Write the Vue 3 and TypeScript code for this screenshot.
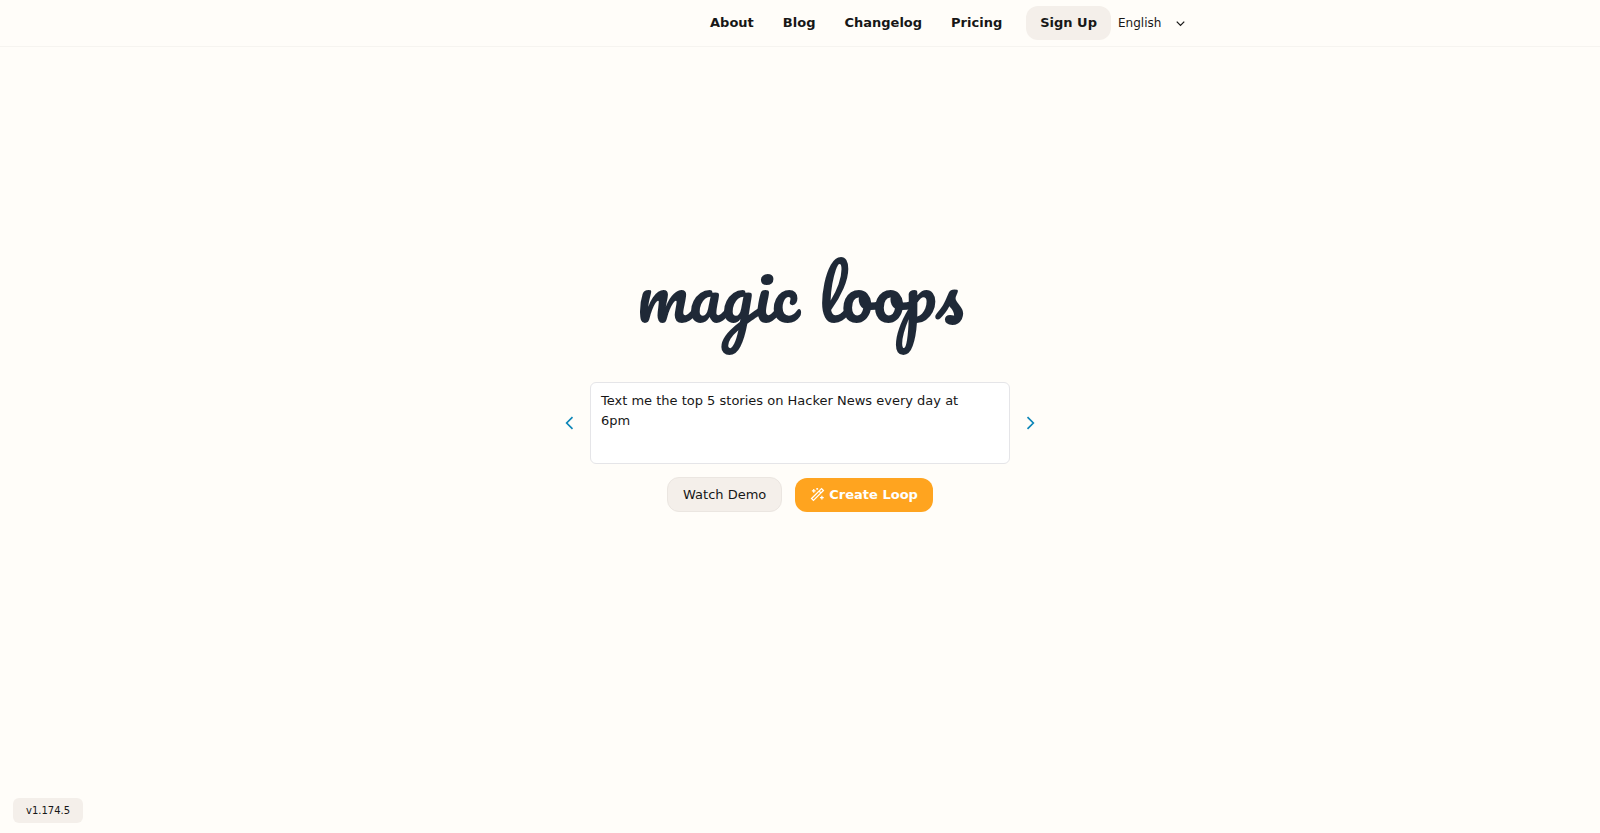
<script setup lang="ts">
import { ref } from 'vue'

interface NavLink {
  label: string
  href: string
}

const links: NavLink[] = [
  { label: 'About', href: '#about' },
  { label: 'Blog', href: '#blog' },
  { label: 'Changelog', href: '#changelog' },
  { label: 'Pricing', href: '#pricing' },
]

const prompts: string[] = [
  'Text me the top 5 stories on Hacker News every day at 6pm',
  'Email me the weather forecast every morning at 8am',
]

const index = ref(0)
const prompt = ref(prompts[0])
const language = ref('English')

function step(delta: number): void {
  index.value = (index.value + delta + prompts.length) % prompts.length
  prompt.value = prompts[index.value]
}
</script>

<template>
  <div class="page">
    <header class="header">
      <nav class="nav" aria-label="Main">
        <a v-for="link in links" :key="link.label" class="nav-link" :href="link.href">{{ link.label }}</a>
      </nav>
      <a class="sign-up" href="#signup">Sign Up</a>
      <div class="language">
        <select v-model="language" class="language-select" aria-label="Language">
          <option>English</option>
        </select>
        <svg class="language-icon" viewBox="0 0 24 24" aria-hidden="true">
          <path d="M6 9l6 6 6-6" />
        </svg>
      </div>
    </header>

    <main class="main">
      <h1 class="wordmark">magic loops</h1>
      <div class="composer">
        <button class="arrow" type="button" aria-label="Previous example" @click="step(-1)">
          <svg class="arrow-icon" viewBox="0 0 24 24"><path d="M15 5l-7 7 7 7" /></svg>
        </button>
        <textarea v-model="prompt" class="prompt" aria-label="Describe your loop"></textarea>
        <button class="arrow" type="button" aria-label="Next example" @click="step(1)">
          <svg class="arrow-icon" viewBox="0 0 24 24"><path d="M9 5l7 7-7 7" /></svg>
        </button>
      </div>
      <div class="actions">
        <button class="button demo" type="button">Watch Demo</button>
        <button class="button create" type="button">
          <svg class="wand" viewBox="0 0 24 24" aria-hidden="true">
            <path d="M2.5 18.5 18.5 2.5 21.5 5.5 5.5 21.5zM14.5 6.5l3 3" />
            <path d="M6 3v6M3 6h6M19 14v6M16 17h6M11.5 1.500v3M10 3h3" />
          </svg>
          Create Loop
        </button>
      </div>
    </main>

    <footer class="footer"><span class="version">v1.174.5</span></footer>
  </div>
</template>

<style>
body {
  background: #fffdf9;
}
</style>

<style scoped>
.page {
  display: flex;
  flex-direction: column;
  min-height: 100vh;
  box-sizing: border-box;
  background: #fffdf9;
  color: #171717;
  font-family: "DejaVu Sans", sans-serif;
  font-size: 13px;
  line-height: 20px;
}

.page *,
.page *::before {
  box-sizing: border-box;
}

.header {
  display: flex;
  align-items: center;
  justify-content: flex-end;
  height: 47px;
  padding-right: calc(50% - 392px);
  border-bottom: 1px solid #f6f4f0;
}

.nav {
  display: flex;
  gap: 29px;
  margin-right: 24px;
}

.nav-link,
.sign-up {
  color: inherit;
  font-weight: 700;
  text-decoration: none;
}

.sign-up {
  padding: 7px 14px;
  border-radius: 12px;
  background: #f4efea;
}

.language {
  position: relative;
  display: flex;
  align-items: center;
  width: 81px;
}

.language-select {
  width: 100%;
  height: 27px;
  padding: 0 0 0 7px;
  border: 0;
  appearance: none;
  background: transparent;
  color: inherit;
  font: 12px "DejaVu Sans", sans-serif;
}

.language-icon {
  position: absolute;
  right: 4px;
  width: 15px;
  height: 15px;
  fill: none;
  stroke: currentColor;
  stroke-width: 2;
  pointer-events: none;
}

.main {
  display: flex;
  flex: 1;
  flex-direction: column;
  align-items: center;
  justify-content: center;
  padding-bottom: 95px;
}

.wordmark {
  margin: 0 0 32px;
  color: #1f2937;
  font: 400 70px/112px Pacifico, cursive;
}

.composer {
  display: flex;
  align-items: center;
  gap: 10px;
  width: 480px;
  max-width: 100%;
}

.arrow {
  display: flex;
  flex: none;
  padding: 0;
  border: 0;
  background: transparent;
  color: #0d86b8;
  cursor: pointer;
}

.arrow-icon {
  width: 20px;
  height: 20px;
  fill: none;
  stroke: currentColor;
  stroke-width: 2;
}

.prompt {
  flex: 1;
  min-width: 0;
  height: 82px;
  padding: 8px 24px 8px 10px;
  border: 1px solid #e5e5e8;
  border-radius: 6px;
  background: #ffffff;
  color: inherit;
  font: 13px/20px "DejaVu Sans", sans-serif;
  resize: none;
}

.actions {
  display: flex;
  align-items: center;
  gap: 13px;
  margin-top: 13px;
}

.button {
  display: flex;
  align-items: center;
  gap: 4px;
  height: 34px;
  padding: 0 15px;
  border: 0;
  border-radius: 12px;
  color: inherit;
  font: 13px/20px "DejaVu Sans", sans-serif;
  cursor: pointer;
}

.demo {
  height: 35px;
  border: 1px solid #ebe6e1;
  background: #f4efea;
}

.create {
  background: #ffa41f;
  color: #ffffff;
  font-weight: 700;
}

.wand {
  width: 15px;
  height: 15px;
  fill: none;
  stroke: currentColor;
  stroke-width: 2;
}

.footer {
  display: flex;
  padding: 0 13px 10px;
}

.version {
  padding: 3px 13px;
  border-radius: 6px;
  background: #f4efea;
  font-size: 10px;
  line-height: 19px;
}
</style>
